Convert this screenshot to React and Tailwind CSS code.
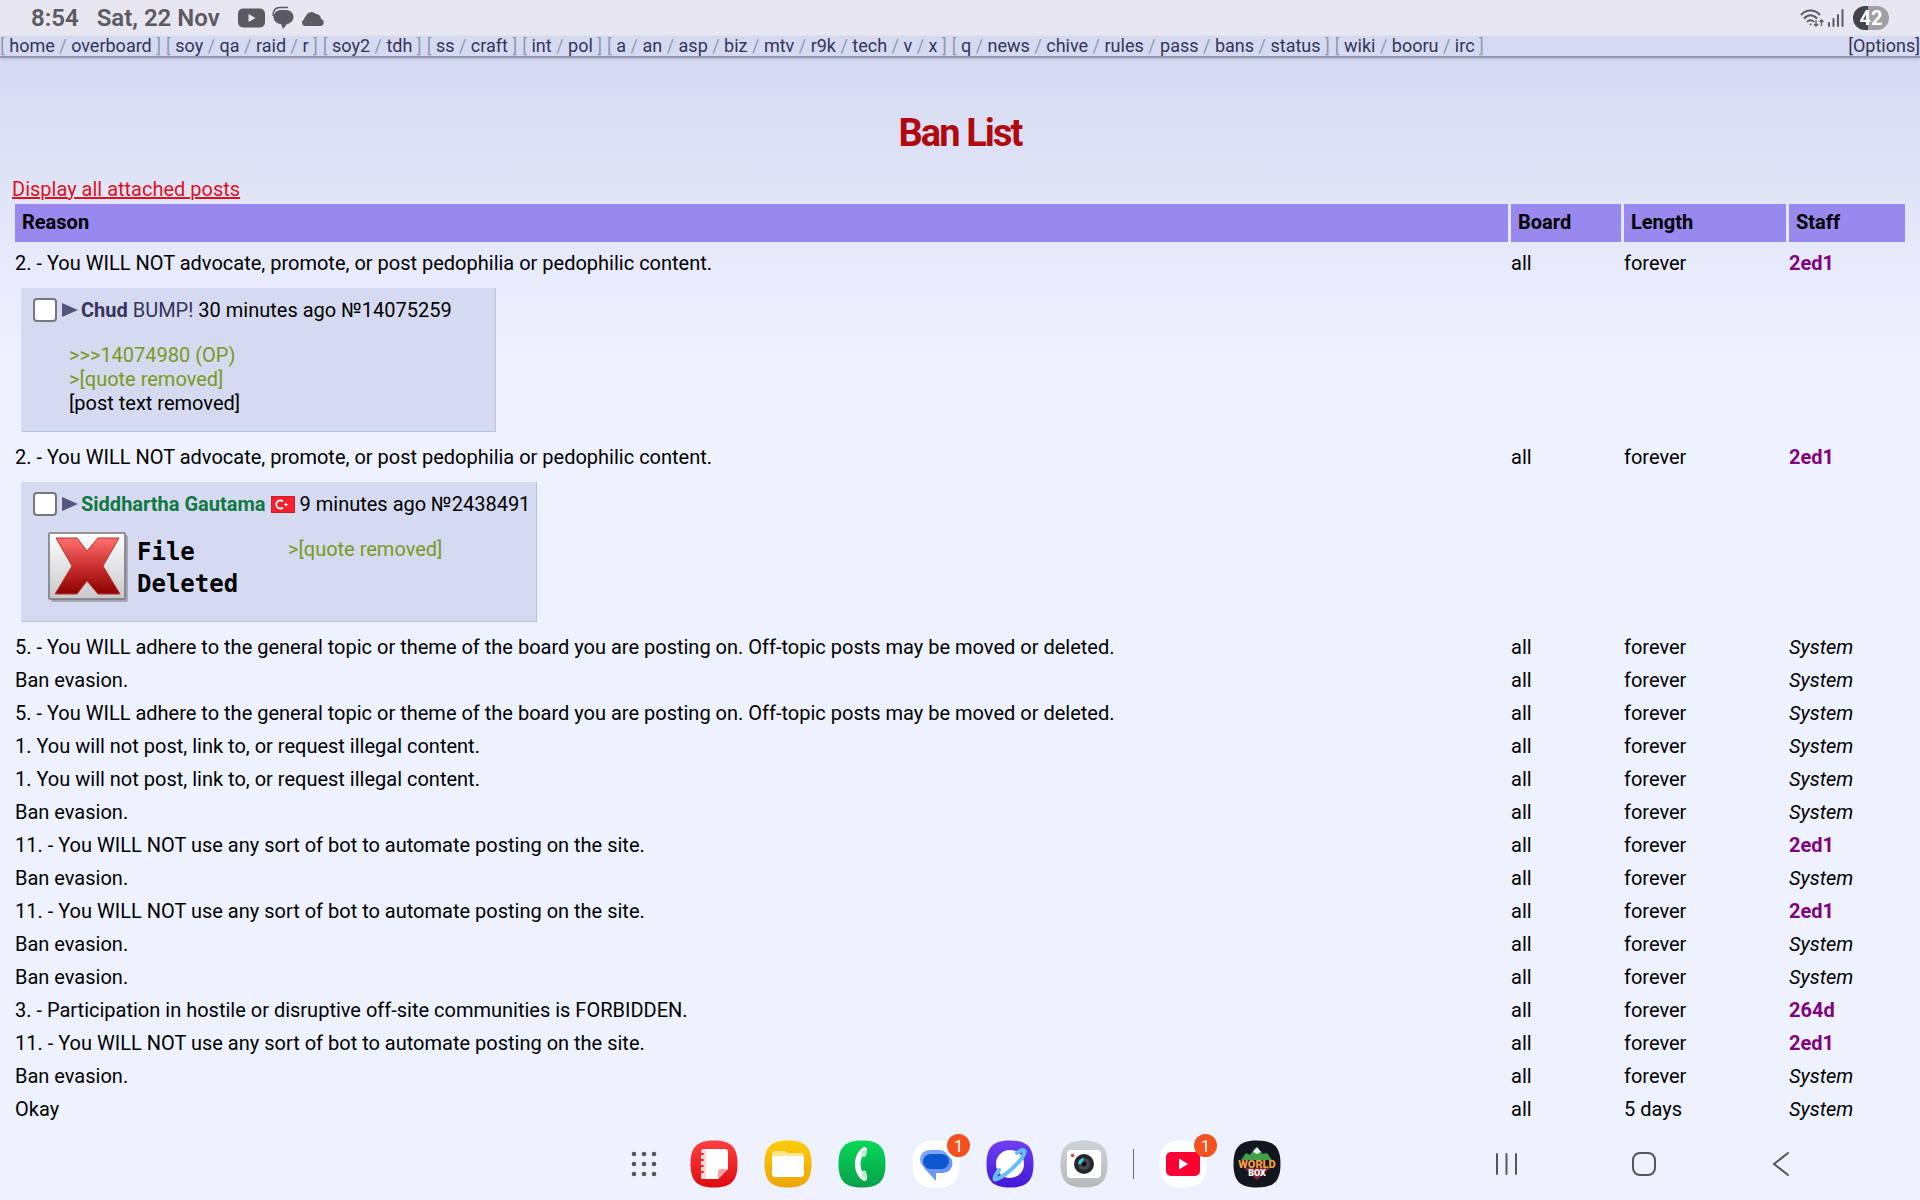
import React from 'react';

const navGroups = [
  ['home', 'overboard'],
  ['soy', 'qa', 'raid', 'r'],
  ['soy2', 'tdh'],
  ['ss', 'craft'],
  ['int', 'pol'],
  ['a', 'an', 'asp', 'biz', 'mtv', 'r9k', 'tech', 'v', 'x'],
  ['q', 'news', 'chive', 'rules', 'pass', 'bans', 'status'],
  ['wiki', 'booru', 'irc'],
];

const RULE_2 = '2. - You WILL NOT advocate, promote, or post pedophilia or pedophilic content.';
const RULE_5 = '5. - You WILL adhere to the general topic or theme of the board you are posting on. Off-topic posts may be moved or deleted.';
const RULE_1 = '1. You will not post, link to, or request illegal content.';
const RULE_11 = '11. - You WILL NOT use any sort of bot to automate posting on the site.';
const RULE_3 = '3. - Participation in hostile or disruptive off-site communities is FORBIDDEN.';
const EVASION = 'Ban evasion.';

const bans = [
  { id: 1, reason: RULE_2, staff: '2ed1', post: 'bump' },
  { id: 2, reason: RULE_2, staff: '2ed1', post: 'deleted' },
  { id: 3, reason: RULE_5 },
  { id: 4, reason: EVASION },
  { id: 5, reason: RULE_5 },
  { id: 6, reason: RULE_1 },
  { id: 7, reason: RULE_1 },
  { id: 8, reason: EVASION },
  { id: 9, reason: RULE_11, staff: '2ed1' },
  { id: 10, reason: EVASION },
  { id: 11, reason: RULE_11, staff: '2ed1' },
  { id: 12, reason: EVASION },
  { id: 13, reason: EVASION },
  { id: 14, reason: RULE_3, staff: '264d' },
  { id: 15, reason: RULE_11, staff: '2ed1' },
  { id: 16, reason: EVASION },
  { id: 17, reason: 'Okay', length: '5 days' },
];

const StatusBar = () => (
  <header className="flex h-9 items-center justify-between bg-[#e8e6f0] pl-[31px] pr-[31px] text-[#5b5a60]">
    <div className="flex items-center text-[24px] leading-7 font-semibold">
      <span>8:54</span>
      <span className="ml-[18px]">Sat, 22 Nov</span>
      <svg className="ml-[18px] h-5 w-[27px]" viewBox="0 0 27 20">
        <rect width="27" height="19" y="0.5" rx="5" fill="currentColor" />
        <path d="M10.5 6v8l7-4z" fill="#e8e6f0" />
      </svg>
      <svg className="ml-[7px] h-[24px] w-[22px]" viewBox="0 0 22 24">
        <path d="M8 4h6a7 7 0 0 1 1 14l-4 5-2-5a7 7 0 0 1-1-14z" fill="currentColor" />
        <path d="M1 10C1 4 4 1.500 8 1.500h8" fill="none" stroke="currentColor" strokeWidth="1.500" />
      </svg>
      <svg className="ml-[7px] h-[18px] w-6" viewBox="0 0 24 18">
        <path d="M3.500 17a3.500 3.500 0 0 1-.5-6.500A4 4 0 0 1 5 7a6 6 0 0 1 10-2 5 5 0 0 1 5 5 3.600 3.600 0 0 1 0 7z" fill="currentColor" />
      </svg>
    </div>
    <div className="flex items-center">
      <svg className="h-5 w-6" viewBox="0 0 24 20" fill="none" stroke="currentColor" strokeWidth="2">
        <path d="M1 7C6 1 15 1 20 7M4 10.500c4-4.500 9-4.500 13 0M7 14c2-2.500 5-2.500 7 0" />
        <circle cx="10.500" cy="16.500" r="1" fill="currentColor" stroke="none" />
        <path d="M16 12v6M14 16l2 2 2-2M21.500 18v-6M19.500 14l2-2 2 2" strokeWidth="1.300" />
      </svg>
      <svg className="ml-1 h-[18px] w-4" viewBox="0 0 16 18" fill="currentColor">
        <rect x="0" y="13" width="2" height="5" rx="1" />
        <rect x="4.500" y="9" width="2" height="9" rx="1" />
        <rect x="9" y="5" width="2" height="13" rx="1" />
        <rect x="13.500" y="0" width="2" height="18" rx="1" />
      </svg>
      <span className="ml-[9px] flex h-6 w-9 items-center justify-center rounded-full bg-linear-to-r from-[#444347] from-42% to-[#a09fa3] to-42% text-[20px] leading-6 font-bold text-white">
        42
      </span>
    </div>
  </header>
);

const BoardNav = () => (
  <nav className="flex h-[22px] items-center justify-between border-b-2 border-[#9095b0] bg-[#d6daf0] text-[18px] leading-5 text-[#34345c] shadow">
    <div className="flex gap-[5px] text-[#8c9ab0]">
      {navGroups.map((group) => (
        <span key={group[0]} className="whitespace-pre">
          {'[ '}
          {group.map((name, i) => (
            <React.Fragment key={name}>
              {i > 0 && ' / '}
              <a href={`#${name}`} className="text-[#34345c]">{name}</a>
            </React.Fragment>
          ))}
          {' ]'}
        </span>
      ))}
    </div>
    <a href="#options">[Options]</a>
  </nav>
);

const PostCheck = ({ label }) => (
  <>
    <input
      type="checkbox"
      aria-label={label}
      className="h-6 w-6 shrink-0 appearance-none rounded-[4px] border-2 border-[#767680] bg-white"
    />
    <svg className="ml-[5px] mr-[3px] h-4 w-4 shrink-0" viewBox="0 0 16 16">
      <path d="M0 1l16 7-16 7z" fill="#55557f" />
    </svg>
  </>
);

const BumpPost = () => (
  <article className="mt-[13px] ml-[6px] h-[144px] w-fit min-w-[475px] border-r border-b border-[#b7c5d9] bg-[#d6daf0] pt-[10px] pl-3">
    <div className="flex items-center">
      <PostCheck label="Select post 14075259" />
      <span className="whitespace-pre">
        <b className="font-bold text-[#34345c]">Chud</b>
        <span className="text-[#34345c]"> BUMP! </span>
        30 minutes ago №14075259
      </span>
    </div>
    <div className="mt-[21px] ml-9 text-[#789922]">
      <p>&gt;&gt;&gt;14074980 (OP)</p>
      <p>&gt;[quote removed]</p>
      <p className="text-black">[post text removed]</p>
    </div>
  </article>
);

const DeletedPost = () => (
  <article className="mt-[13px] ml-[6px] h-[140px] w-fit border-r border-b border-[#b7c5d9] bg-[#d6daf0] pt-[10px] pr-[6px] pl-3">
    <div className="flex items-center">
      <PostCheck label="Select post 2438491" />
      <b className="font-bold text-[#117743]">Siddhartha Gautama</b>
      <svg className="mx-[5px] h-[17px] w-6" viewBox="0 0 24 17">
        <rect x="0.500" y="0.500" width="23" height="16" fill="#f5202c" stroke="#c4202a" />
        <path d="M12 5.500a4 4 0 1 0 0 6" fill="none" stroke="#fff" strokeWidth="1.800" />
        <path d="M14.500 6l1 2 2 .5-2 1-1 1.500-.5-2-1.500-.5 1.500-.5z" fill="#fff" />
      </svg>
      <span>9 minutes ago №2438491</span>
    </div>
    <div className="ml-[15px] flex">
      <svg className="mt-4 h-[70px] w-[80px]" viewBox="0 0 80 70">
        <defs>
          <linearGradient id="tile" x1="0" y1="0" x2="0" y2="1">
            <stop offset="0" stopColor="#fff" />
            <stop offset="1" stopColor="#c8c8cc" />
          </linearGradient>
          <linearGradient id="cross" x1="0" y1="0" x2="0" y2="1">
            <stop offset="0" stopColor="#ff7070" />
            <stop offset="0.500" stopColor="#cc3030" />
            <stop offset="1" stopColor="#8a0000" />
          </linearGradient>
        </defs>
        <rect x="3" y="3" width="77" height="67" rx="2" fill="#a5a7b8" />
        <rect x="1" y="1" width="76" height="66" rx="1" fill="url(#tile)" stroke="#777" strokeWidth="1.500" />
        <path d="M8 6h21l10 13L50 6h21L55 34l17 28H50L39 49 29 62H7l17-28z" fill="url(#cross)" stroke="#b33" />
      </svg>
      <div className="mt-5 ml-[9px] w-[151px] font-['DejaVu_Sans_Mono',monospace] text-[24px] leading-8 font-bold">
        File
        <br />
        Deleted
      </div>
      <p className="mt-[21px] text-[#789922]">&gt;[quote removed]</p>
    </div>
  </article>
);

const AppButton = ({ label, badge, children }) => (
  <button type="button" aria-label={label} className="relative h-12 w-12">
    <svg className="h-12 w-12" viewBox="0 0 48 48">{children}</svg>
    {badge && (
      <span className="absolute -top-[6px] -right-[10px] flex h-[23px] w-[23px] items-center justify-center rounded-full bg-[#f4511e] text-[17px] leading-5 text-white">
        {badge}
      </span>
    )}
  </button>
);

// rounded "squircle" every launcher icon sits on
const Tile = ({ fill }) => (
  <path d="M24 .5C41 .5 47.500 7 47.500 24S41 47.500 24 47.500.5 41 .5 24 7 .5 24 .5z" fill={fill} />
);

const Gradient = ({ id, from, to }) => (
  <linearGradient id={id} x1="0" y1="0" x2="0" y2="1">
    <stop offset="0" stopColor={from} />
    <stop offset="1" stopColor={to} />
  </linearGradient>
);

const Dock = () => (
  <footer className="grid grid-cols-[1fr_auto_1fr] items-center pt-[19px] pb-3">
    <span />
    <div className="flex items-center gap-[26px] pr-2">
      <button type="button" aria-label="All apps" className="mr-[7px] h-[26px] w-[26px]">
        <svg viewBox="0 0 26 26" fill="#55555f">
          {[3, 13, 23].map((y) => [3, 13, 23].map((x) => <circle key={`${x}-${y}`} cx={x} cy={y} r="2.300" />))}
        </svg>
      </button>
      <AppButton label="Notes">
        <Gradient id="red" from="#ff4040" to="#dc0c10" />
        <Tile fill="url(#red)" />
        <path d="M14 9h21a3 3 0 0 1 3 3v17l-10 10H14a3 3 0 0 1-3-3V12a3 3 0 0 1 3-3z" fill="#fff" />
        <path d="M28 39v-7a3 3 0 0 1 3-3h7z" fill="#ff9fa0" />
        <path d="M11 10h5v29h-5z" fill="#ffd5d5" />
        <path d="M10 14h3M10 20h3M10 26h3M10 32h3" stroke="#f02a2c" strokeWidth="2" strokeLinecap="round" />
      </AppButton>
      <AppButton label="My Files">
        <Gradient id="yellow" from="#fccb08" to="#eda50a" />
        <Tile fill="url(#yellow)" />
        <path d="M8 19v-6a2 2 0 0 1 2-2h11l3 2h14a2 2 0 0 1 2 2v6z" fill="#ffe48a" />
        <rect x="8" y="16" width="32" height="21" rx="3" fill="#fff" />
      </AppButton>
      <AppButton label="Phone">
        <Gradient id="green" from="#08d858" to="#06a04a" />
        <Tile fill="url(#green)" />
        <path d="M26 7c-12 6-12 28 0 34 2 0 3-1 3-3l-1-6c-1-2-3-1-4-1-2-4-2-10 0-14 2 0 3 0 4-2l1-5c0-2-1-3-3-3z" fill="#fff" />
        <path d="M24 17c2 0 3 0 4-2l1-5-5 1zM24 31c1 0 3-1 4 1l1 6-5-1z" fill="#b5efcb" />
      </AppButton>
      <AppButton label="Messages" badge="1">
        <Tile fill="#fff" />
        <rect x="8" y="10" width="29" height="19" rx="9.500" fill="#7ba2fb" />
        <path d="M19 14h12a9 9 0 0 1 0 19h-7v8L12 28z" fill="#6b96f7" />
        <rect x="11" y="14" width="26" height="15" rx="7.500" fill="#0b57d0" />
      </AppButton>
      <AppButton label="Internet">
        <Gradient id="violet" from="#7040f0" to="#4318d8" />
        <Tile fill="url(#violet)" />
        <circle cx="24" cy="24" r="14" fill="#fff" />
        <path d="M13 30c-5 7-6 11-2 9C19 36 34 23 38 14c2-5-1-5-7-1" fill="none" stroke="#68bff5" strokeWidth="4" strokeLinecap="round" />
      </AppButton>
      <AppButton label="Camera">
        <Gradient id="grey" from="#d0d1d4" to="#b8babe" />
        <Tile fill="url(#grey)" />
        <rect x="7" y="10" width="34" height="28" rx="4" fill="#fff" />
        <circle cx="12.500" cy="15.500" r="1.700" fill="#d84040" />
        <circle cx="24" cy="24" r="10" fill="#25272b" />
        <circle cx="24" cy="24" r="6" fill="#474b52" />
        <path d="M18 24a6 6 0 0 1 6-6l-1 4-2 2z" fill="#38c7dc" />
        <circle cx="24" cy="24" r="2.500" fill="#101114" />
      </AppButton>
      <span className="-mx-px h-[30px] w-px bg-[#6a6a74]" />
      <AppButton label="YouTube" badge="1">
        <Tile fill="#fff" />
        <rect x="7" y="12" width="34" height="24" rx="5" fill="#ff0033" />
        <path d="M20 18.500v11l9-5.500z" fill="#fff" />
      </AppButton>
      <AppButton label="WorldBox">
        <Tile fill="#11161f" />
        <path d="M8 20l5-7 4 2 5-7 3 1 5 5 4-1 5 7z" fill="#3fa048" />
        <path d="M20 12l4-5 4 5-4 2z" fill="#e6f0ee" />
        <path d="M11 28l13 12 13-12z" fill="#8f2433" />
        <text x="24" y="28" textAnchor="middle" fontFamily="Roboto, sans-serif" fontWeight="900" fontSize="11" fill="#f99b3a">WORLD</text>
        <text x="24" y="36" textAnchor="middle" fontFamily="Roboto, sans-serif" fontWeight="900" fontSize="9" fill="#fff">BOX</text>
      </AppButton>
    </div>
    <div className="flex items-center justify-end gap-[114px] pr-[126px]">
      <button type="button" aria-label="Recent apps">
        <svg className="h-6 w-6" viewBox="0 0 24 24" stroke="#55555f" strokeWidth="2" strokeLinecap="round">
          <path d="M3 2v20M12.500 2v20M22 2v20" />
        </svg>
      </button>
      <button type="button" aria-label="Home">
        <svg className="h-6 w-6" viewBox="0 0 24 24" fill="none" stroke="#55555f" strokeWidth="2">
          <rect x="1" y="1" width="22" height="22" rx="7" />
        </svg>
      </button>
      <button type="button" aria-label="Back">
        <svg className="h-6 w-6" viewBox="0 0 24 24" fill="none" stroke="#55555f" strokeWidth="2" strokeLinecap="round">
          <path d="M18 1L4 12l14 11" />
        </svg>
      </button>
    </div>
  </footer>
);

const App = () => {
  return (
    <div className="min-h-screen bg-[#eef2ff] bg-linear-to-b from-[#d1d5ee] to-[#eef2ff] to-[360px] font-[Roboto,sans-serif] text-[20px] leading-6 text-black">
      <StatusBar />
      <BoardNav />
      <main>
        <h1 className="pt-[51px] text-center text-[38px] leading-12 font-bold tracking-tighter text-[#af0a0f]">Ban List</h1>
        <a href="#posts" className="mt-[20px] ml-3 block w-fit text-[#e01020] underline">Display all attached posts</a>
        <div className="mt-[3px] px-3">
          <table className="w-full border-separate border-spacing-x-[3px] border-spacing-y-0 text-left">
            <thead>
              <tr className="[&>th]:h-[38px] [&>th]:bg-[#9988ee] [&>th]:px-[7px] [&>th]:pb-[2px] [&>th]:font-bold">
                <th>Reason</th>
                <th className="w-[110px]">Board</th>
                <th className="w-[162px]">Length</th>
                <th className="w-[116px]">Staff</th>
              </tr>
            </thead>
            <tbody>
              {bans.map((ban) => (
                <tr key={ban.id} className="align-top [&>td]:pt-[9px]">
                  <td className={ban.post ? 'pb-1' : ''}>
                    {ban.reason}
                    {ban.post === 'bump' && <BumpPost />}
                    {ban.post === 'deleted' && <DeletedPost />}
                  </td>
                  <td>all</td>
                  <td>{ban.length || 'forever'}</td>
                  <td>
                    {ban.staff ? <b className="font-bold text-[#800080]">{ban.staff}</b> : <i>System</i>}
                  </td>
                </tr>
              ))}
            </tbody>
          </table>
        </div>
      </main>
      <Dock />
    </div>
  );
};

export default App;
